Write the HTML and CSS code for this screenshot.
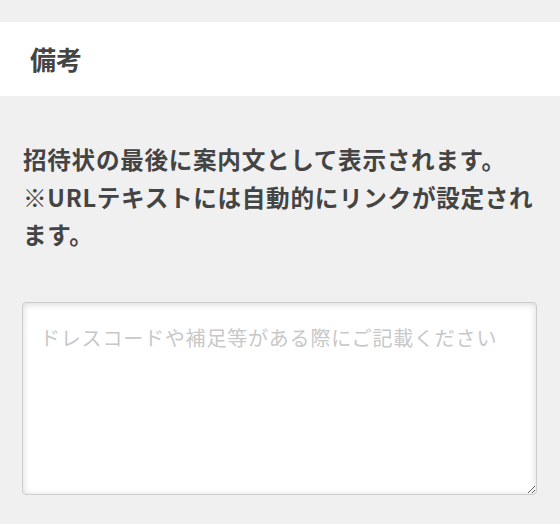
FILE: index.html
```html
<!DOCTYPE html>
<html lang="ja">
<head>
<meta charset="utf-8">
<title>備考</title>
<link rel="stylesheet" href="styles.css">
</head>
<body>
<div class="page">
  <div class="header"><h2 class="title">備考</h2></div>
  <div class="content">
    <p class="desc">招待状の最後に案内文として表示されます。※URLテキストには自動的にリンクが設定されます。</p>
    <textarea class="memo" placeholder="ドレスコードや補足等がある際にご記載ください"></textarea>
  </div>
</div>
</body>
</html>
```
FILE: styles.css
```css
html, body {
  margin: 0;
  padding: 0;
  background: #f0f0f0;
}
body {
  font-family: "Noto Sans CJK JP", "Noto Sans", sans-serif;
  color: #444;
}
.page {
  padding-top: 22px;
}
.header {
  background: #fff;
  height: 74px;
  padding: 0 30px;
  display: flex;
  align-items: center;
}
.title {
  margin: 0;
  font-size: 26px;
  font-weight: 700;
  color: #444;
  line-height: 1;
}
.content {
  padding: 45px 22px 0 23px;
}
.desc {
  margin: 0;
  font-size: 23.6px;
  font-weight: 700;
  letter-spacing: 0.7px;
  line-height: 37.5px;
  color: #444;
}
.memo {
  display: block;
  box-sizing: border-box;
  width: 515px;
  height: 193px;
  margin: 48px 0 0 -1px;
  padding: 20px 17px;
  border: 1px solid #ccc;
  border-radius: 4px;
  background: #fff;
  box-shadow: inset 0 1px 7px rgba(0, 0, 0, 0.16);
  font-family: "Noto Sans CJK JP", "Noto Sans", sans-serif;
  font-size: 20px;
  letter-spacing: 0.8px;
  line-height: 30px;
  color: #444;
  outline: none;
}
.memo::placeholder {
  color: #c8c8c8;
}
```
